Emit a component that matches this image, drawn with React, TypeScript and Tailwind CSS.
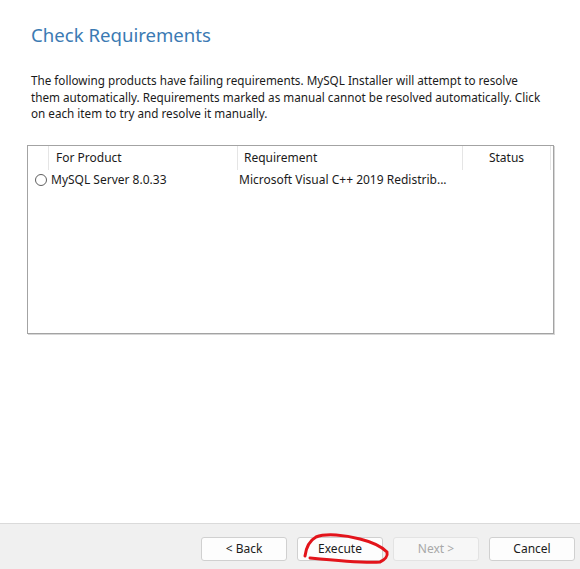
import React from 'react';

const font = { fontFamily: '"Noto Sans", "Open Sans", sans-serif' };

const WizardButton: React.FC<{ label: string; disabled?: boolean }> = ({ label, disabled }) => (
  <button
    disabled={disabled}
    className={`w-[86px] h-[24px] rounded-[3px] border text-[12px] leading-none ${
      disabled ? 'border-[#e3e3e3] bg-[#f7f7f7] text-[#a8a8a8]' : 'border-[#d0d0d0] bg-[#fdfdfd] text-[#1b1b1b]'
    }`}
  >
    {label}
  </button>
);

export default function App() {
  return (
    <div className="w-[580px] h-[569px] flex flex-col bg-white text-[#1b1b1b]" style={font}>
      <div className="flex-1 pl-[31px] pr-[28px] pt-[22px]">
        <h1 className="text-[18.6px] leading-[26px] text-[#3b7ab3] font-normal">Check Requirements</h1>

        <p className="mt-[24px] w-[514px] text-[11.7px] leading-[16.5px]">
          The following products have failing requirements. MySQL Installer will attempt to resolve them
          automatically. Requirements marked as manual cannot be resolved automatically. Click on each item to
          try and resolve it manually.
        </p>

        {/* requirement list */}
        <div className="mt-[23px] -ml-[4px] w-[527px] h-[189px] border border-[#a3a3a3] shadow-[1px_1px_0_#d6d6d6] bg-white text-[12px]">
          <div className="flex h-[24px] items-center">
            <div className="w-[20px] h-full" />
            <div className="w-[189px] h-full border-l border-[#e5e5e5] pl-[7px] flex items-center">For Product</div>
            <div className="w-[225px] h-full border-l border-[#e5e5e5] pl-[6px] flex items-center">Requirement</div>
            <div className="w-[89px] h-full border-l border-[#e5e5e5] border-r flex items-center justify-center">Status</div>
          </div>
          <div className="flex h-[21px] items-center">
            <div className="w-[23px] flex justify-center pl-[3px]">
              <span className="block w-[12px] h-[12px] rounded-full border border-[#5f5f5f] bg-white" />
            </div>
            <div className="w-[188px] whitespace-nowrap">MySQL Server 8.0.33</div>
            <div className="w-[222px] whitespace-nowrap overflow-hidden">Microsoft Visual C++ 2019 Redistrib...</div>
          </div>
        </div>
      </div>

      {/* footer */}
      <div className="relative h-[46px] bg-[#f0f0f0] border-t border-[#dadada] flex items-center justify-end gap-[10px] pr-[5px] pt-[4px]">
        <WizardButton label="< Back" />
        <WizardButton label="Execute" />
        <WizardButton label="Next >" disabled />
        <WizardButton label="Cancel" />

        <svg
          className="absolute left-[300px] top-[6px] pointer-events-none"
          width="92"
          height="40"
          viewBox="0 0 92 40"
          fill="none"
        >
          <path
            d="M5 26 C 6 18, 9 11, 16 7 C 26 3, 45 5, 60 9 C 72 12, 82 17, 87 22 C 88 26, 85 30, 80 32 C 65 33, 40 31, 10 28"
            stroke="#e3141b"
            strokeWidth="3"
            strokeLinecap="round"
            strokeLinejoin="round"
          />
        </svg>
      </div>
    </div>
  );
}
